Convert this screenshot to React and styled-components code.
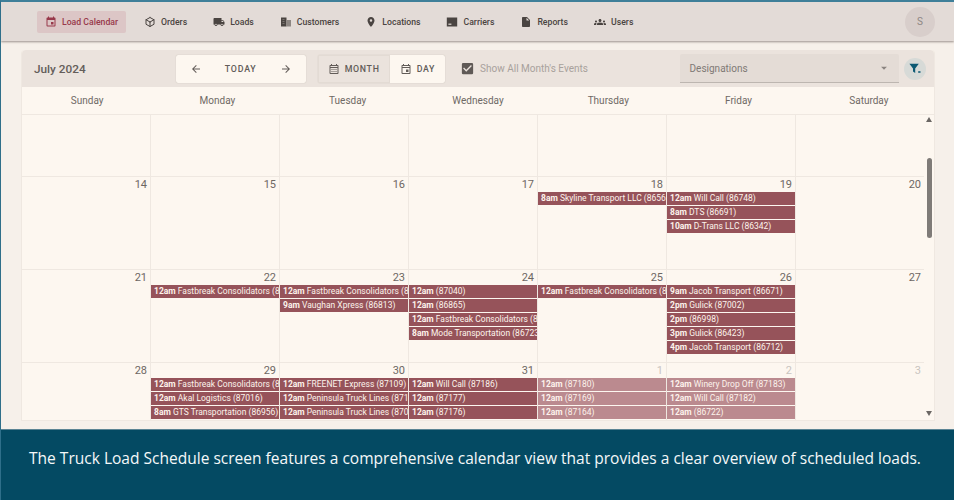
import React from 'react'
import styled, { createGlobalStyle } from 'styled-components'
import {
  MdEvent,
  MdLocalShipping,
  MdLocationOn,
  MdInsertDriveFile,
  MdGroups,
  MdArrowBack,
  MdArrowForward,
  MdOutlineCalendarMonth,
  MdOutlineEvent,
  MdCheckBox,
  MdArrowDropDown,
} from 'react-icons/md'
import { TbBox } from 'react-icons/tb'

const GlobalStyle = createGlobalStyle`
  html, body {
    margin: 0;
    padding: 0;
    background: #f6f0ea;
  }
  * {
    box-sizing: border-box;
  }
`

const Page = styled.div`
  width: 954px;
  height: 500px;
  display: flex;
  flex-direction: column;
  overflow: hidden;
  font-family: Roboto, sans-serif;
  border-top: 2px solid #3f7f99;
  border-left: 1px solid #2f6f8a;
`

const Nav = styled.nav`
  height: 39px;
  flex-shrink: 0;
  display: flex;
  align-items: center;
  padding: 0 19px 0 36px;
  gap: 10px;
  background: #e3dbd7;
  box-shadow: 0 1px 2px rgba(80, 70, 65, 0.55);
`

const NavItem = styled.div`
  height: 22px;
  display: flex;
  align-items: center;
  gap: 5px;
  padding: 0 8px;
  border-radius: 2px;
  font-size: 8.7px;
  font-weight: 500;
  white-space: nowrap;
  color: ${(p) => (p.$active ? '#98394b' : '#4a4441')};
  background: ${(p) => (p.$active ? '#dcc6c6' : 'transparent')};
  svg {
    font-size: 12px;
    flex-shrink: 0;
  }
`

const Avatar = styled.div`
  width: 30px;
  height: 30px;
  margin-left: auto;
  border-radius: 50%;
  display: flex;
  align-items: center;
  justify-content: center;
  background: #d8cecb;
  color: #8f8784;
  font-size: 10px;
`

const Content = styled.main`
  flex: 1;
  min-height: 0;
  padding: 9px 19px 8px 20px;
`

const Panel = styled.section`
  height: 100%;
  display: flex;
  flex-direction: column;
  border-radius: 4px 4px 0 0;
  background: #fdf7f0;
  border: 1px solid #efe8e1;
  border-top: 0;
`

const Toolbar = styled.div`
  height: 37px;
  flex-shrink: 0;
  display: flex;
  align-items: center;
  padding: 0 8px 0 12px;
  background: #ebe3dd;
  border-radius: 4px 4px 0 0;
`

const Title = styled.div`
  width: 142px;
  font-size: 11.8px;
  font-weight: 500;
  color: #645e5a;
`

const ButtonGroup = styled.div`
  height: 28px;
  display: flex;
  border-radius: 2px;
  background: #fdf7f0;
  box-shadow: 0 0 1px rgba(90, 80, 70, 0.35);
  margin-right: ${(p) => p.$gap}px;
  color: #625c58;
`

const NavButton = styled.div`
  width: 130px;
  display: flex;
  align-items: center;
  justify-content: space-between;
  padding: 0 14px;
  font-size: 8.8px;
  font-weight: 500;
  letter-spacing: 0.8px;
  svg {
    font-size: 12px;
  }
`

const ViewButton = styled.div`
  display: flex;
  align-items: center;
  gap: 5px;
  padding: 0 10px;
  font-size: 8.8px;
  font-weight: 500;
  letter-spacing: 0.7px;
  background: ${(p) => (p.$active ? '#ebe3dd' : 'transparent')};
  box-shadow: ${(p) => (p.$active ? 'inset 0 0 0 1px #e3dbd4' : 'none')};
  svg {
    font-size: 12px;
  }
`

const CheckRow = styled.div`
  display: flex;
  align-items: center;
  gap: 5px;
  width: 220px;
  font-size: 10px;
  color: #a8a19c;
  svg {
    font-size: 15px;
    color: #5f5956;
    flex-shrink: 0;
  }
`

const SelectField = styled.div`
  width: 220px;
  height: 29px;
  display: flex;
  align-items: center;
  justify-content: space-between;
  padding: 0 8px 0 10px;
  background: #e4dcd6;
  border-bottom: 1px solid #bdb6b0;
  border-radius: 2px 2px 0 0;
  font-size: 10px;
  color: #7f7975;
  svg {
    font-size: 14px;
    color: #8a8480;
  }
`

const FilterButton = styled.div`
  width: 22px;
  height: 22px;
  margin-left: 5px;
  border-radius: 50%;
  display: flex;
  align-items: center;
  justify-content: center;
  background: #d7dad7;
`

const HeaderRow = styled.div`
  height: 28px;
  flex-shrink: 0;
  display: grid;
  grid-template-columns: repeat(7, 1fr);
  border-bottom: 1px solid #efe8e1;
`

const DayName = styled.div`
  display: flex;
  align-items: center;
  justify-content: center;
  font-size: 10px;
  color: #6f6965;
`

const Body = styled.div`
  flex: 1;
  min-height: 0;
  display: flex;
`

const Weeks = styled.div`
  width: 903px;
  display: flex;
  flex-direction: column;
  overflow: hidden;
`

const Week = styled.div`
  flex: 0 0 ${(p) => p.$height}px;
  display: grid;
  grid-template-columns: repeat(7, 129px);
  border-bottom: 1px solid #efe8e1;
`

const Cell = styled.div`
  min-width: 0;
  overflow: hidden;
  border-right: 1px solid #efe8e1;
`

const DateNum = styled.div`
  height: 15px;
  padding-right: 3px;
  text-align: right;
  font-size: 11px;
  line-height: 15px;
  color: ${(p) => (p.$muted ? '#c9c4bf' : '#6d6763')};
`

const Event = styled.div`
  height: 13px;
  margin-bottom: 1px;
  padding-left: 3px;
  font-size: 8.5px;
  line-height: 13px;
  white-space: nowrap;
  overflow: hidden;
  color: #fdf3ec;
  background: ${(p) => (p.$muted ? '#bb8a8f' : '#96535a')};
  b {
    font-weight: 700;
  }
`

const ScrollTrack = styled.div`
  width: 10px;
  display: flex;
  flex-direction: column;
  align-items: center;
`

const Arrow = styled.div`
  width: 0;
  height: 0;
  border-left: 3px solid transparent;
  border-right: 3px solid transparent;
  ${(p) => (p.$down ? 'border-top: 5px solid #6b6764;' : 'border-bottom: 5px solid #6b6764;')}
  margin: ${(p) => (p.$down ? 'auto 0 4px' : '2px 0 0')};
`

const Thumb = styled.div`
  width: 5px;
  height: 80px;
  margin-top: 36px;
  border-radius: 3px;
  background: #7f7b78;
`

const Banner = styled.footer`
  height: 71px;
  flex-shrink: 0;
  margin-left: -1px;
  padding: 10px 0 0 29px;
  background: #044a63;
  border-top: 1px solid #5b8494;
  color: #f4f8f9;
  font-family: 'Open Sans', sans-serif;
  font-size: 15.54px;
  line-height: 36px;
  white-space: nowrap;
`

const CustomersIcon = () => (
  <svg width="12" height="12" viewBox="0 0 12 12">
    <path d="M1 1.5h5.5v9H1z" fill="#4a4441" />
    <path d="M6.5 4H11v6.5H6.5z" fill="#8d8682" />
    <path d="M2.5 3.5h2M2.5 5.5h2M2.5 7.5h2" stroke="#8d8682" strokeWidth="0.7" />
  </svg>
)

const CarriersIcon = () => (
  <svg width="12" height="12" viewBox="0 0 12 12">
    <path d="M.8 1.5h10.4v9H.8z" fill="#4a4441" />
    <path d="M2.4 7.6h3v1.2h-3z" fill="#e3dbd7" />
  </svg>
)

const FilterClearIcon = () => (
  <svg width="13" height="13" viewBox="0 0 13 13">
    <path d="M.4 1.8h9.4L6.2 6.4V11L4 9.6V6.4z" fill="#0d5a74" />
    <path d="M9.4 9l2 2M11.4 9l-2 2" stroke="#0d5a74" strokeWidth="1" />
  </svg>
)

const navItems = [
  { label: 'Load Calendar', Icon: MdEvent, active: true },
  { label: 'Orders', Icon: TbBox },
  { label: 'Loads', Icon: MdLocalShipping },
  { label: 'Customers', Icon: CustomersIcon },
  { label: 'Locations', Icon: MdLocationOn },
  { label: 'Carriers', Icon: CarriersIcon },
  { label: 'Reports', Icon: MdInsertDriveFile },
  { label: 'Users', Icon: MdGroups },
]

const days = ['Sunday', 'Monday', 'Tuesday', 'Wednesday', 'Thursday', 'Friday', 'Saturday']

const weeks = [
  {
    height: 62,
    cells: [{}, {}, {}, {}, {}, {}, {}],
  },
  {
    height: 93,
    cells: [
      { date: 14 },
      { date: 15 },
      { date: 16 },
      { date: 17 },
      { date: 18, events: [['8am', 'Skyline Transport LLC (86566)']] },
      {
        date: 19,
        events: [
          ['12am', 'Will Call (86748)'],
          ['8am', 'DTS (86691)'],
          ['10am', 'D-Trans LLC (86342)'],
        ],
      },
      { date: 20 },
    ],
  },
  {
    height: 93,
    cells: [
      { date: 21 },
      { date: 22, events: [['12am', 'Fastbreak Consolidators (87041)']] },
      {
        date: 23,
        events: [
          ['12am', 'Fastbreak Consolidators (87042)'],
          ['9am', 'Vaughan Xpress (86813)'],
        ],
      },
      {
        date: 24,
        events: [
          ['12am', '(87040)'],
          ['12am', '(86865)'],
          ['12am', 'Fastbreak Consolidators (87043)'],
          ['8am', 'Mode Transportation (86723)'],
        ],
      },
      { date: 25, events: [['12am', 'Fastbreak Consolidators (87044)']] },
      {
        date: 26,
        events: [
          ['9am', 'Jacob Transport (86671)'],
          ['2pm', 'Gulick (87002)'],
          ['2pm', '(86998)'],
          ['3pm', 'Gulick (86423)'],
          ['4pm', 'Jacob Transport (86712)'],
        ],
      },
      { date: 27 },
    ],
  },
  {
    height: 93,
    cells: [
      { date: 28 },
      {
        date: 29,
        events: [
          ['12am', 'Fastbreak Consolidators (87045)'],
          ['12am', 'Akal Logistics (87016)'],
          ['8am', 'GTS Transportation (86956)'],
        ],
      },
      {
        date: 30,
        events: [
          ['12am', 'FREENET Express (87109)'],
          ['12am', 'Peninsula Truck Lines (87110)'],
          ['12am', 'Peninsula Truck Lines (87070)'],
          ['8am', 'DTS (87071)'],
        ],
      },
      {
        date: 31,
        events: [
          ['12am', 'Will Call (87186)'],
          ['12am', '(87177)'],
          ['12am', '(87176)'],
          ['12am', '(87175)'],
        ],
      },
      {
        date: 1,
        muted: true,
        events: [
          ['12am', '(87180)'],
          ['12am', '(87169)'],
          ['12am', '(87164)'],
          ['12am', '(87163)'],
        ],
      },
      {
        date: 2,
        muted: true,
        events: [
          ['12am', 'Winery Drop Off (87183)'],
          ['12am', 'Will Call (87182)'],
          ['12am', '(86722)'],
          ['12am', '(86721)'],
        ],
      },
      { date: 3, muted: true },
    ],
  },
]

export default function App() {
  return (
    <Page>
      <GlobalStyle />
      <Nav>
        {navItems.map(({ label, Icon, active }) => (
          <NavItem key={label} $active={active}>
            <Icon />
            {label}
          </NavItem>
        ))}
        <Avatar>S</Avatar>
      </Nav>
      <Content>
        <Panel>
          <Toolbar>
            <Title>July 2024</Title>
            <ButtonGroup $gap={12}>
              <NavButton>
                <MdArrowBack />
                TODAY
                <MdArrowForward />
              </NavButton>
            </ButtonGroup>
            <ButtonGroup $gap={15}>
              <ViewButton $active>
                <MdOutlineCalendarMonth />
                MONTH
              </ViewButton>
              <ViewButton>
                <MdOutlineEvent />
                DAY
              </ViewButton>
            </ButtonGroup>
            <CheckRow>
              <MdCheckBox />
              Show All Month's Events
            </CheckRow>
            <SelectField>
              Designations
              <MdArrowDropDown />
            </SelectField>
            <FilterButton>
              <FilterClearIcon />
            </FilterButton>
          </Toolbar>
          <HeaderRow>
            {days.map((day) => (
              <DayName key={day}>{day}</DayName>
            ))}
          </HeaderRow>
          <Body>
            <Weeks>
              {weeks.map((week, i) => (
                <Week key={i} $height={week.height}>
                  {week.cells.map((cell, j) => (
                    <Cell key={j}>
                      <DateNum $muted={cell.muted}>{cell.date}</DateNum>
                      {(cell.events || []).map(([time, name]) => (
                        <Event key={time + name} $muted={cell.muted}>
                          <b>{time}</b> {name}
                        </Event>
                      ))}
                    </Cell>
                  ))}
                </Week>
              ))}
            </Weeks>
            <ScrollTrack>
              <Arrow />
              <Thumb />
              <Arrow $down />
            </ScrollTrack>
          </Body>
        </Panel>
      </Content>
      <Banner>
        The Truck Load Schedule screen features a comprehensive calendar view that provides a clear overview of scheduled loads.
      </Banner>
    </Page>
  )
}
